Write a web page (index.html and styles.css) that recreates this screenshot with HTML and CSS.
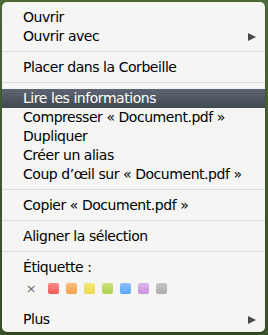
FILE: index.html
```html
<!DOCTYPE html>
<html lang="fr">
<head>
    <meta charset="UTF-8">
    <meta name="viewport" content="width=device-width, initial-scale=1.0">
    <title>Menu contextuel</title>
    <link rel="stylesheet" href="styles.css">
</head>
<body>
    <div class="menu">
        <div class="item">Ouvrir</div>
        <div class="item">Ouvrir avec <span class="arrow"></span></div>
        <div class="sep"></div>
        <div class="item">Placer dans la Corbeille</div>
        <div class="sep"></div>
        <div class="item active">Lire les informations</div>
        <div class="item">Compresser « Document.pdf »</div>
        <div class="item">Dupliquer</div>
        <div class="item">Créer un alias</div>
        <div class="item">Coup d’œil sur « Document.pdf »</div>
        <div class="sep"></div>
        <div class="item">Copier « Document.pdf »</div>
        <div class="sep"></div>
        <div class="item">Aligner la sélection</div>
        <div class="sep"></div>
        <div class="item">Étiquette :</div>
        <div class="labels">
            <span class="none">×</span>
            <span class="swatch red"></span>
            <span class="swatch orange"></span>
            <span class="swatch yellow"></span>
            <span class="swatch green"></span>
            <span class="swatch blue"></span>
            <span class="swatch purple"></span>
            <span class="swatch gray"></span>
        </div>
        <div class="item more">Plus <span class="arrow"></span></div>
    </div>
</body>
</html>
```

FILE: styles.css
```css
* {
    margin: 0;
    padding: 0;
    box-sizing: border-box;
}

body {
    width: 268px;
    height: 335px;
    overflow: hidden;
    background: linear-gradient(180deg, #4b6b38, #3a5229);
    font-family: 'DejaVu Sans', sans-serif;
    font-size: 14px;
    letter-spacing: -0.45px;
    color: #000;
    padding: 2px 3px 0 2px;
}

.menu {
    height: 330px;
    background: #f5f5f3;
    border-radius: 5px;
    padding: 6px 0 3px;
    display: flex;
    flex-direction: column;
    box-shadow: 0 1px 3px rgba(0,0,0,0.3);
}

.item {
    height: 19px;
    line-height: 19px;
    padding: 0 9px 0 21px;
    display: flex;
    justify-content: space-between;
    align-items: center;
    white-space: nowrap;
}

.item.active {
    background: linear-gradient(180deg, #5d6672, #414852);
    color: #fff;
}

.arrow {
    width: 0;
    height: 0;
    border-top: 4.5px solid transparent;
    border-bottom: 4.5px solid transparent;
    border-left: 8px solid #4a4a4a;
}

.sep {
    height: 1px;
    background: #dcdcda;
    margin: 5px 0 6px;
}

.labels {
    display: flex;
    align-items: center;
    gap: 7px;
    padding: 6px 0 0 19px;
    height: 17px;
}

.none {
    width: 20px;
    font-size: 13px;
    line-height: 11px;
    color: #6f6f6f;
    text-align: center;
}

.swatch {
    width: 11px;
    height: 11px;
    border-radius: 2px;
}

.red { background: linear-gradient(180deg, #f98a8a, #ee5a5a); }
.orange { background: linear-gradient(180deg, #f9c07a, #f2a04a); }
.yellow { background: linear-gradient(180deg, #f6e87a, #eed84a); }
.green { background: linear-gradient(180deg, #cbe27a, #afd34e); }
.blue { background: linear-gradient(180deg, #8cc0fa, #5fa4f5); }
.purple { background: linear-gradient(180deg, #ddb6ee, #c995e0); }
.gray { background: linear-gradient(180deg, #c6c6c6, #ababab); }

.more {
    margin-top: auto;
}
```
